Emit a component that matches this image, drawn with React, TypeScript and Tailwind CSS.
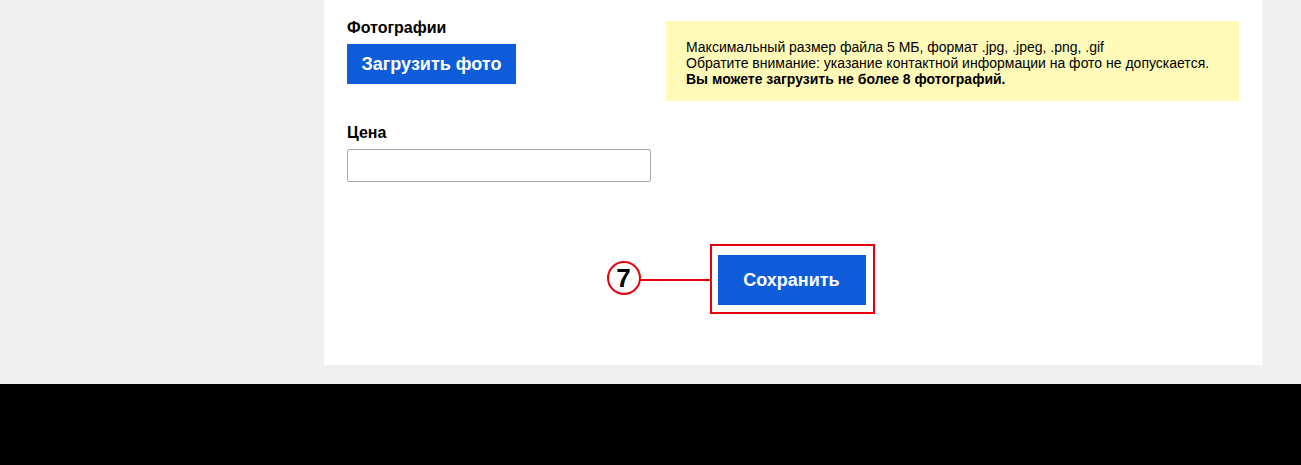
export default function App() {
  return (
    <div className="w-[1301px] h-[465px] flex flex-col font-['Liberation_Sans',Arial,sans-serif] text-black">
      <div className="h-[384px] bg-[#f0f0f0]">
        <div className="ml-[324px] w-[938px] h-[365px] bg-white pl-[23px] pt-[19px] relative">
          <div className="flex">
            <div className="w-[304px] flex flex-col">
              <div className="text-[16px] leading-[18px] font-bold">Фотографии</div>
              <button className="mt-[7px] w-[169px] h-[40px] bg-[#0f5cdb] text-white text-[18px] font-bold">
                Загрузить фото
              </button>
              <div className="mt-[40px] text-[16px] leading-[18px] font-bold">Цена</div>
              <input
                type="text"
                className="mt-[7px] w-[304px] h-[33px] border border-[#a9a9a9] rounded-[2px] outline-none"
              />
            </div>
            <div className="ml-[15px] mt-[2px] w-[573px] h-[80px] bg-[#fffab8] pl-[20px] pt-[18px] text-[14px] leading-[16px]">
              <div>Максимальный размер файла 5 МБ, формат .jpg, .jpeg, .png, .gif</div>
              <div>Обратите внимание: указание контактной информации на фото не допускается.</div>
              <div className="font-bold">Вы можете загрузить не более 8 фотографий.</div>
            </div>
          </div>
          <div className="mt-[62px] flex justify-center pr-[25px]">
            <div className="relative border-2 border-[#e8000c] pt-[9px] pb-[7px] pl-[6px] pr-[7px]">
              <button className="w-[148px] h-[50px] bg-[#0f5cdb] text-white text-[18px] font-bold">
                Сохранить
              </button>
              <div className="absolute left-[-72px] top-[33px] w-[70px] h-[2px] bg-[#e8000c]" />
              <div className="absolute left-[-105px] top-[15px] w-[34px] h-[34px] rounded-full border-2 border-[#e8000c] bg-white flex items-center justify-center text-[26px] font-bold leading-none">
                7
              </div>
            </div>
          </div>
        </div>
      </div>
      <div className="h-[81px] bg-black" />
    </div>
  );
}
